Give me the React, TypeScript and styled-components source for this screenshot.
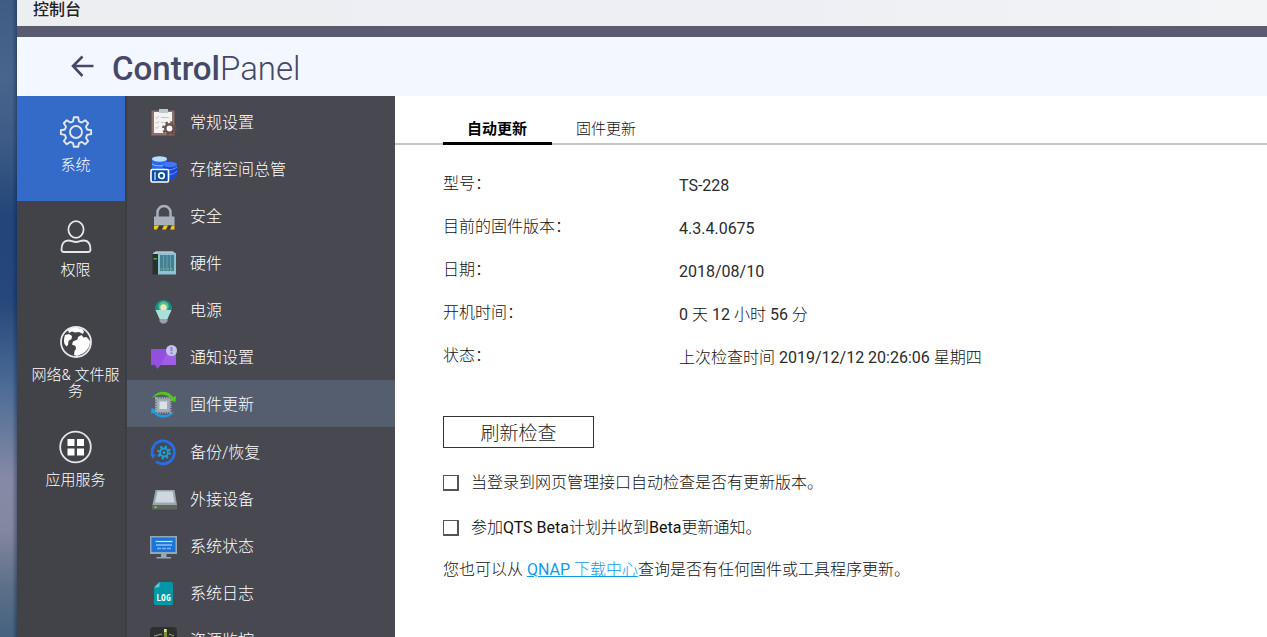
import React from 'react';
import styled, { createGlobalStyle, css } from 'styled-components';

const GlobalStyle = createGlobalStyle`
  * { box-sizing: border-box; }
  body {
    margin: 0;
    font-family: Roboto, "Noto Sans CJK SC", sans-serif;
    font-size: 16px;
    color: #111;
  }
  ul, dl, dd, h1, p { margin: 0; padding: 0; }
  ul { list-style: none; }
  button { font: inherit; cursor: pointer; }
`;

const cjkLight = css`
  font-family: Roboto, "Noto Sans CJK SC", sans-serif;
  font-weight: 300;
`;

const Desktop = styled.div`
  height: 100vh;
  overflow: hidden;
  padding-left: 17px;
  background: linear-gradient(90deg, transparent 12px, rgba(0, 20, 50, 0.35) 17px, transparent 17px),
    linear-gradient(#3f5c85 0%, #48658d 12%, #3d5b86 22%, #22467a 34%, #25477b 47%,
      #4d6c96 61%, #858aa5 75%, #84879f 83%, #5d7088 92%, #46617f 100%);
`;

const Window = styled.div`
  height: 100%;
  display: flex;
  flex-direction: column;
  background: #fff;
`;

const TitleBar = styled.div`
  flex: none;
  height: 37px;
  padding: 0 16px;
  border-bottom: 11px solid #5b5b70;
  background: linear-gradient(90deg, #eceef2, #eeeff4 60%, #f3f4f6);
  font-size: 16px;
  line-height: 20px;
  font-weight: 500;
  color: #222;
`;

const Header = styled.header`
  flex: none;
  height: 59px;
  display: flex;
  align-items: center;
  gap: 16px;
  padding-left: 53px;
  background: #f3f7ff;
  color: #474868;
`;

const BackButton = styled.button`
  display: flex;
  padding: 0;
  border: 0;
  background: none;
  color: inherit;
`;

const Title = styled.h1`
  padding-top: 4px;
  font-size: 33px;
  line-height: 56px;
  font-weight: 300;
  strong { font-weight: 500; }
`;

const Body = styled.div`
  flex: 1;
  min-height: 0;
  display: flex;
`;

const Categories = styled.nav`
  flex: none;
  width: 110px;
  border-right: 2px solid #3c3c44;
  background: #424249;
`;

const Category = styled.button<{ $active?: boolean }>`
  ${cjkLight}
  display: flex;
  flex-direction: column;
  align-items: center;
  gap: 7px;
  width: 100%;
  height: 105px;
  padding: 18px 4px 0 13px;
  border: 0;
  background: ${(p) => (p.$active ? '#346ac8' : 'transparent')};
  color: #fff;
  font-size: 15px;
  line-height: 16px;
  svg { flex: none; }
`;

const Menu = styled.nav`
  flex: none;
  width: 268px;
  padding-top: 2px;
  overflow: hidden;
  background: #484850;
`;

const MenuItem = styled.button<{ $active?: boolean }>`
  ${cjkLight}
  display: flex;
  align-items: center;
  gap: 13px;
  width: 100%;
  height: 47px;
  margin-bottom: ${(p) => (p.$active ? 1 : 0)}px;
  padding: 2px 0 0 23px;
  border: 0;
  background: ${(p) => (p.$active ? '#555e6e' : 'transparent')};
  color: #fff;
  font-size: 16px;
  line-height: 20px;
`;

const Main = styled.main`
  flex: 1;
  min-width: 0;
`;

const Tabs = styled.div`
  display: flex;
  height: 49px;
  padding-left: 48px;
  background: linear-gradient(#c6c6c6, #c6c6c6) bottom / 100% 2px no-repeat;
`;

const Tab = styled.button<{ $active?: boolean }>`
  padding: 20px 25px 0 24px;
  border: 0;
  border-bottom: 3px solid ${(p) => (p.$active ? '#000' : 'transparent')};
  background: none;
  font-size: 15px;
  line-height: 20px;
  font-weight: ${(p) => (p.$active ? 700 : 300)};
  color: ${(p) => (p.$active ? '#000' : '#111')};
`;

const Panel = styled.div`
  ${cjkLight}
  padding: 19px 48px 0;
  line-height: 24px;
`;

const Facts = styled.dl`
  display: grid;
  grid-template-columns: 236px 1fr;
  grid-auto-rows: 43px;
  align-items: center;
  dt { padding-bottom: 3px; }
`;

const Value = styled.dd`
  font-weight: 400;
  color: #2b2b2b;
`;

const Thin = styled.span`
  font-weight: 300;
  color: #111;
`;

const RefreshButton = styled.button`
  display: block;
  width: 151px;
  height: 32px;
  margin: 37px 0 18px;
  padding: 3px 0 0;
  border: 1px solid #333;
  background: #fff;
  font-size: 19px;
  line-height: 27px;
  font-weight: 300;
  color: #222;
`;

const CheckRow = styled.label`
  display: flex;
  align-items: center;
  gap: 12px;
  height: 33px;
  margin-bottom: 12px;
`;

const CheckBox = styled.input`
  appearance: none;
  width: 16px;
  height: 16px;
  margin: 0;
  border: 1px solid #555;
  border-width: 1px 2px 2px 1px;
  background: #fff;
  &:checked { background: #555; }
`;

const Latin = styled.span`
  font-weight: 400;
`;

const Note = styled.p`
  line-height: 28px;
  a { color: #0d9bee; }
`;

const line = { fill: 'none', stroke: '#e4e6ea', strokeWidth: 1.8 };

const GearIcon = () => (
  <svg width="36" height="36" viewBox="-1 -1 38 38" {...line} strokeWidth="2" strokeLinejoin="round">
    <path d="M15.7 2.5h4.6l.8 4.2 3 1.3 3.600-2.400 3.200 3.200-2.400 3.600 1.300 3 4.200.8v4.100l-4.200.8-1.300 3 2.400 3.600-3.200 3.200-3.600-2.400-3 1.300-.8 3.700h-4.600l-.8-3.700-3-1.300-3.600 2.400-3.200-3.200 2.400-3.600-1.300-3-4.200-.8v-4.100l4.200-.8 1.300-3-2.400-3.600 3.200-3.200 3.600 2.400 3-1.300z" />
    <circle cx="18" cy="18" r="6.300" />
  </svg>
);

const UserIcon = () => (
  <svg width="36" height="36" viewBox="0 0 36 36" {...line}>
    <ellipse cx="18" cy="10.500" rx="7.600" ry="8.400" />
    <path d="M3.500 30.500c0-6 2.500-9 7-9 3 0 4 1.500 7.500 1.500s4.500-1.500 7.500-1.500c4.500 0 7 3 7 9q0 2.500-2.500 2.500H6Q3.500 33 3.500 30.500z" />
  </svg>
);

const GlobeIcon = () => (
  <svg width="36" height="36" viewBox="0 0 36 36" {...line}>
    <circle cx="18" cy="18" r="15" />
    <path fill="#fff" stroke="none" d="M10 6C13 4 15 3.500 19 3.700l5 1.300 2 2.500-1 2.500-4-2-4 .5-3-1-3 1.500zM7 11l4-1 3 2-.5 3-3 2-.5 4-1.500 1.500L6.500 20c-1-3-.500-6 .5-9zM20 13l3.500-2 2 2.500 3-.5 3.500 4c0 6-3 10-7 12.500l-6 2.500-3-1 .5-4 1.500-2-.5-3-3.500-1.500 1-3 4.500-2z" />
  </svg>
);

const AppsIcon = () => (
  <svg width="36" height="36" viewBox="0 0 36 36" {...line}>
    <circle cx="17.500" cy="18" r="15.300" />
    <path fill="#fff" stroke="none" d="M9.500 10h7v7h-7zM19 10h7v7h-7zM9.500 19.500h7v7h-7zM19 19.500h7v7h-7z" />
  </svg>
);

const Icon = ({ children }: { children: React.ReactNode }) => (
  <svg width="27" height="27" viewBox="0 0 27 27" aria-hidden="true">{children}</svg>
);

const ClipboardIcon = () => (
  <Icon>
    <path fill="#8d7169" d="M1.500 1.500h23v25h-23z" />
    <path fill="#f3f3f3" d="M4 3h18v21H4z" />
    <path fill="#b9cad0" d="M9 0h9v4H9z" />
    <path fill="none" stroke="#c4c4c4" strokeWidth="1" d="m5.500 8 1.200 1.500L9 7m-3.500 6 1.200 1.500L9 12m-3.500 6 1.200 1.500L9 17M11 8.500h8m-8 5h4" />
    <circle cx="19.500" cy="19.500" r="6.300" fill="none" stroke="#6b4f49" strokeWidth="2.200" strokeDasharray="2.400 2.550" />
    <circle cx="19.500" cy="19.500" r="4.200" fill="#fff" stroke="#6b4f49" strokeWidth="2.600" />
  </Icon>
);

const StorageIcon = () => (
  <Icon>
    <path fill="#2d68ee" d="M2 3v11h15V3z" />
    <path fill="none" stroke="#8fc4ff" d="M2 8c3 2.500 12 2.500 15 0" />
    <ellipse cx="9.500" cy="3" rx="7.500" ry="2.700" fill="#b9ddff" />
    <path fill="#1c48da" d="M13 9v13c4 3 11 2 14-2V8z" />
    <path fill="none" stroke="#6c9bff" d="M13 13c4 2 10 1 14-2m-10 7c4 1 7 0 10-3" />
    <ellipse cx="20" cy="8.500" rx="7" ry="2.800" fill="#3f78f5" />
    <rect x="1" y="13.500" width="17.500" height="12.500" rx="1.500" fill="#0b4c9d" stroke="#fff" strokeWidth="1.600" />
    <path stroke="#d4e8ff" strokeWidth="1.300" d="M5 16v8" />
    <circle cx="11.500" cy="19.700" r="2.800" fill="none" stroke="#fff" strokeWidth="1.700" />
  </Icon>
);

const LockIcon = () => (
  <Icon>
    <path fill="none" stroke="#a7b0ba" strokeWidth="2.500" d="M7.500 15V9.500a6.500 6.500 0 0 1 13 0V15" />
    <path fill="#a8b0ba" d="M4 13.500h20.500v9H4z" />
    <path fill="#3a3a3a" d="M4 22.500h20.500v4H4z" />
    <path fill="#f8c822" d="M5 22.500h4l-2 4H4V23zM14 22.500h4l-2 4h-4zM22 22.500h2.500v4H20z" />
  </Icon>
);

const HardwareIcon = () => (
  <Icon>
    <path fill="#b9c4ca" d="m3 3 3-1.800h17L26 4H3z" />
    <path fill="#2a3230" d="M2.500 4H8v20.500H2.500z" />
    <path fill="#59a83c" d="M3.500 8H7v1.500H3.500z" />
    <path fill="#88c5d5" d="M8 3h18v21.500H8z" />
    <path fill="#457f90" d="M10 5h14v16H10z" />
    <path stroke="#62a0b0" d="M13.500 5v16m3.500-16v16M20.500 5v16" />
    <path stroke="#a6c15b" strokeDasharray="1.500 2" d="M10.500 19H24" />
  </Icon>
);

const BulbIcon = () => (
  <Icon>
    <path fill="#0c9384" d="M5 13a8.600 8.600 0 1 1 17 0z" />
    <circle cx="13.500" cy="9.500" r="5.200" fill="#5fb894" />
    <circle cx="13.500" cy="10.500" r="3.200" fill="#e6edb4" />
    <path fill="#a9e0da" d="M5.500 13h16l-4 9h-8z" />
    <path fill="#98a0aa" d="M9.500 22h8v2.500l-2.500 2h-3l-2.500-2z" />
  </Icon>
);

const NoticeIcon = () => (
  <Icon>
    <path fill="#9350df" d="M1 5h25v16H10.500l-3 4-2.500-4H1z" />
    <path fill="#a56be5" opacity=".6" d="M19 5h7v16H11z" />
    <circle cx="21.500" cy="6.500" r="5.500" fill="#c3c7ec" />
    <path stroke="#9a7bdc" strokeWidth="2" d="M21.500 3v4.300m0 1v2" />
  </Icon>
);

const FirmwareIcon = () => (
  <Icon>
    <path fill="#52c817" d="M2 7.500C6-1 18-1.500 23 6l3-1-.500 6-7-2 2.500-1.500C16 2.500 8 2 2 7.500z" />
    <path fill="#209de2" d="M25 20C20 28.500 8 28.500 4 22l-3 .5L1.500 17l6 2-2 1.700C10 25 18 25.500 25 20z" />
    <rect x="6.500" y="7.500" width="13.500" height="13.500" fill="#a2adb7" stroke="#9ba6ae" strokeWidth="3" strokeDasharray="1.500 .9" />
    <path fill="#dae2e5" d="M9.500 10.500h7.500V18H9.500z" />
  </Icon>
);

const BackupIcon = () => (
  <Icon>
    <path fill="none" stroke="#276fe4" strokeWidth="2.800" d="M4.500 5.500A11.500 11.500 0 1 1 6 22.500M2.500 17C1.500 12 2 9 4.500 6" />
    <path fill="#276fe4" d="m0 15 6 .5L3 20z" />
    <circle cx="14" cy="13.500" r="5.800" fill="none" stroke="#18a2e0" strokeWidth="2.400" strokeDasharray="2.200 2.350" />
    <circle cx="14" cy="13.500" r="4" fill="none" stroke="#18a2e0" strokeWidth="1.900" />
    <circle cx="14" cy="13.500" r="1.500" fill="#18a2e0" />
  </Icon>
);

const DriveIcon = () => (
  <Icon>
    <path fill="#98a8ae" d="M5.500 4h19L27 19H2.500z" />
    <path fill="#d0d8df" d="M7.500 5.500h15l2 11H5z" />
    <path fill="#62665f" d="M2 19h25v4.500H2z" />
    <circle cx="5.500" cy="21.300" r="1.200" fill="#72d01f" />
  </Icon>
);

const MonitorIcon = () => (
  <Icon>
    <path fill="#93a8b4" d="M0 3h27v18H0zM11 21h5.500v3H21v1.500H6.500V24H11z" />
    <path fill="#1a75da" d="M1.500 4.500h24v14.500h-24z" />
    <path stroke="#c6e3ff" strokeWidth="1.300" d="M5.500 8.500h17" />
    <path stroke="#78b6f5" strokeWidth="1.800" d="M6 12h16" />
    <path stroke="#78b6f5" strokeWidth="1.600" strokeDasharray="4 1" d="M7 15.500h14" />
  </Icon>
);

const LogIcon = () => (
  <Icon>
    <path fill="#0296a6" d="M9.500 2h12q1.500 0 1.500 1.500v20q0 1.500-1.500 1.500h-16Q4 25 4 23.500v-16z" />
    <path fill="#51cddb" d="M9.500 2v4q0 1.500-1.500 1.500H4z" />
    <text x="13.500" y="21" textAnchor="middle" fontFamily="DejaVu Sans Mono" fontWeight="700" fontSize="8" fill="#fff">LOG</text>
  </Icon>
);

const GaugeIcon = () => (
  <Icon>
    <rect width="27" height="27" rx="4" fill="#302f30" />
    <path fill="#77933d" d="M14 2h3v8l2 6h-7l2-6z" />
    <path fill="#d9e48f" d="M14 2h2.500v3H14z" />
    <path stroke="#9eae59" d="m4 9 8-2m7 0 5 2" />
  </Icon>
);

const categories = [
  { label: '系统', icon: GearIcon },
  { label: '权限', icon: UserIcon },
  { label: '网络& 文件服务', icon: GlobeIcon },
  { label: '应用服务', icon: AppsIcon },
];

const menu = [
  { label: '常规设置', icon: ClipboardIcon },
  { label: '存储空间总管', icon: StorageIcon },
  { label: '安全', icon: LockIcon },
  { label: '硬件', icon: HardwareIcon },
  { label: '电源', icon: BulbIcon },
  { label: '通知设置', icon: NoticeIcon },
  { label: '固件更新', icon: FirmwareIcon },
  { label: '备份/恢复', icon: BackupIcon },
  { label: '外接设备', icon: DriveIcon },
  { label: '系统状态', icon: MonitorIcon },
  { label: '系统日志', icon: LogIcon },
  { label: '资源监控', icon: GaugeIcon },
];

export default function App() {
  return (
    <>
      <GlobalStyle />
      <Desktop>
        <Window>
          <TitleBar>控制台</TitleBar>
          <Header>
            <BackButton aria-label="返回">
              <svg width="26" height="26" viewBox="0 0 26 26" fill="none" stroke="currentColor" strokeWidth="2.600">
                <path d="M12.500 2.500 3 12l9.500 10M3 12h20.500" />
              </svg>
            </BackButton>
            <Title><strong>Control</strong>Panel</Title>
          </Header>
          <Body>
            <Categories>
              {categories.map(({ label, icon: CategoryIcon }, i) => (
                <Category key={label} $active={i === 0}>
                  <CategoryIcon />
                  <span>{label}</span>
                </Category>
              ))}
            </Categories>
            <Menu>
              <ul>
                {menu.map(({ label, icon: ItemIcon }) => (
                  <li key={label}>
                    <MenuItem $active={label === '固件更新'}>
                      <ItemIcon />
                      {label}
                    </MenuItem>
                  </li>
                ))}
              </ul>
            </Menu>
            <Main>
              <Tabs role="tablist">
                <Tab role="tab" aria-selected="true" $active>自动更新</Tab>
                <Tab role="tab" aria-selected="false">固件更新</Tab>
              </Tabs>
              <Panel>
                <Facts>
                  <dt>型号：</dt>
                  <Value>TS-228</Value>
                  <dt>目前的固件版本：</dt>
                  <Value>4.3.4.0675</Value>
                  <dt>日期：</dt>
                  <Value>2018/08/10</Value>
                  <dt>开机时间：</dt>
                  <Value>0 <Thin>天</Thin> 12 <Thin>小时</Thin> 56 <Thin>分</Thin></Value>
                  <dt>状态：</dt>
                  <Value><Thin>上次检查时间</Thin> 2019/12/12 20:26:06 <Thin>星期四</Thin></Value>
                </Facts>
                <RefreshButton>刷新检查</RefreshButton>
                <CheckRow>
                  <CheckBox type="checkbox" />
                  <span>当登录到网页管理接口自动检查是否有更新版本。</span>
                </CheckRow>
                <CheckRow>
                  <CheckBox type="checkbox" />
                  <span>参加<Latin>QTS Beta</Latin>计划并收到<Latin>Beta</Latin>更新通知。</span>
                </CheckRow>
                <Note>
                  您也可以从 <a href="#download"><Latin>QNAP</Latin> 下载中心</a>查询是否有任何固件或工具程序更新。
                </Note>
              </Panel>
            </Main>
          </Body>
        </Window>
      </Desktop>
    </>
  );
}
